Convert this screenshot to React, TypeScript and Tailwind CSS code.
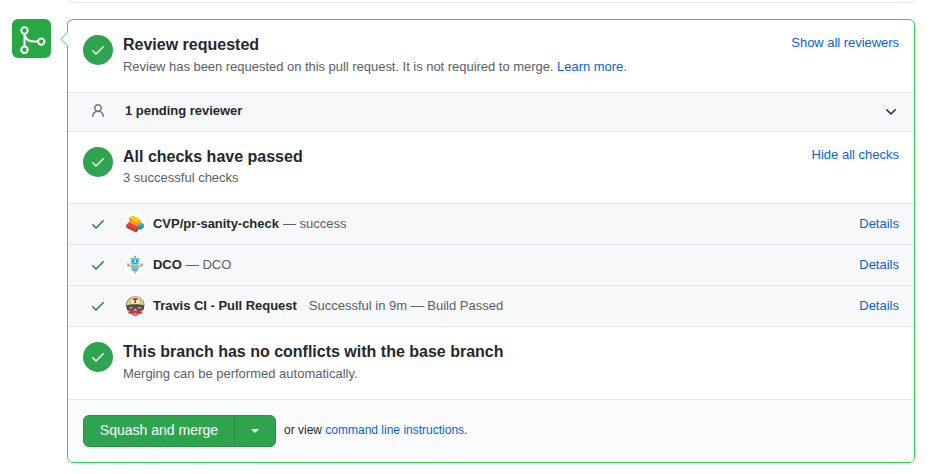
import React from "react";

function CheckMark({ className = "" }: { className?: string }) {
  return (
    <svg viewBox="0 0 16 16" width="16" height="16" fill="currentColor" className={className}>
      <path d="M13.78 4.22a.75.75 0 0 1 0 1.06l-7.25 7.25a.75.75 0 0 1-1.06 0L2.22 9.28a.75.75 0 0 1 1.06-1.06L6 10.94l6.72-6.72a.75.75 0 0 1 1.06 0Z" />
    </svg>
  );
}

function MergeIcon() {
  return (
    <svg viewBox="0 0 39 39" width="39" height="39" fill="none" stroke="white" strokeWidth="2">
      <circle cx="12.5" cy="11.5" r="3.2" />
      <circle cx="12.5" cy="30.7" r="3.2" />
      <circle cx="29.3" cy="22.6" r="3.2" />
      <path d="M12.5 14.700v12.800M12.700 15c.6 4.600 4 7.600 9.300 7.600h4" />
    </svg>
  );
}

function BricksLogo() {
  return (
    <svg viewBox="0 0 20 20" width="20" height="20">
      <path d="M12.300 11.200L15.500 8.500l3.300 1.700v3.300L15 16l-2.700-1.300z" fill="#1597cb" />
      <path d="M12.300 11.200L15.500 8.500l3.300 1.700-3.500 2.400z" fill="#2fb4e0" />
      <path d="M1.300 10.700L4.500 8l8.500 5v3.200L11.200 18.400 1.300 13.800z" fill="#d92f35" />
      <path d="M1.300 10.700L4.500 8l8.500 5-2.300 2.200z" fill="#ee443e" />
      <path d="M4.200 4L7.700 1.700l8 4.300v3.600L12.200 12l-8-4.200z" fill="#eda300" />
      <path d="M4.200 4L7.700 1.700l8 4.300-3.500 2.400z" fill="#fac913" />
    </svg>
  );
}

function RobotLogo() {
  return (
    <svg viewBox="0 0 20 20" width="20" height="20">
      <path d="M10 1v3" stroke="#59b8cf" />
      <circle cx="10" cy="1.500" r="1" fill="#ef766b" />
      <rect x="5.600" y="3" width="8.800" height="6.700" rx=".6" fill="#5cc8e1" />
      <rect x="6.500" y="4.800" width="7" height="2.400" fill="#a9dfec" />
      <path d="M7.200 5h1.800v1.800H7.200zM11 5h1.800v1.800H11z" fill="#3a6b7e" />
      <path d="M8 8.500h4" stroke="#337f94" strokeWidth=".6" />
      <path d="M6.500 10.300h7v4.700L10 17.500 6.500 15z" fill="#4abfdf" />
      <path d="M8 11h4v2.500H8z" fill="#f2a14a" />
      <path d="M8.200 16h3.600L10 19.500z" fill="#d8b591" />
      <path d="M6.500 11.800L3 9.800M13.500 11.800L17 9.800" stroke="#62bfd4" strokeWidth="1.500" />
      <path d="M2 8.200l2 .5v2.500H2.500zM18 8.200l-2 .5v2.500h1.500z" fill="#e97873" />
    </svg>
  );
}

function TravisLogo() {
  return (
    <svg viewBox="0 0 20 20" width="20" height="20">
      <ellipse cx="10.300" cy="12.500" rx="8" ry="7" fill="#c4a079" />
      <path d="M1.500 9.500C1 4.500 5 .7 10.200 .7S19.500 4.500 19 9.500c-5-1.500-12.500-1.500-17.500 0z" fill="#ede0a0" stroke="#6f6849" strokeWidth=".8" />
      <path d="M5.300 2.500L4.500 8M15.200 2.500l.8 5.500" stroke="#9f955d" strokeWidth=".8" fill="none" />
      <path d="M7 1.300h6.500v6H7z" fill="#f2e9bd" />
      <path d="M7.700 3h5M10.200 3v4" stroke="#9d2630" strokeWidth="1.400" />
      <path d="M1 9.700c5-1.300 13.500-1.300 18.500 0L18.500 14l-5.500 1-2.700-3-2.800 3L2 14z" fill="#4d4842" />
      <path d="M4 10.800h4v2.200H4zM12.500 10.800h4v2.200h-4z" fill="#928c7d" />
      <path d="M2.800 17.200c1.200-2.200 3.700-3 7.500-2.200 3.800-.8 6.300 0 7.500 2.200-1.700.6-3.200.1-4.400.5-2 -.9-4.200-.9-6.200 0-1.200-.4-2.700.1-4.400-.5z" fill="#da2b3c" />
      <path d="M7.200 18.300c2 .8 4.200.8 6.200 0v.8c-2 .7-4.200.7-6.200 0z" fill="#a9343c" />
    </svg>
  );
}

function StatusHeader({
  title,
  children,
  action,
  className,
  textClass = "",
  actionClass = "",
}: {
  title: React.ReactNode;
  children: React.ReactNode;
  action?: React.ReactNode;
  className: string;
  textClass?: string;
  actionClass?: string;
}) {
  return (
    <section className={`flex px-[15px] pt-[15px] ${className}`}>
      <div className="flex size-[30px] shrink-0 items-center justify-center rounded-full bg-[#2ea44f] text-white">
        <CheckMark />
      </div>
      <div className="ml-[10px] flex-1">
        <h3 className="-mt-[2px] text-[16px] font-bold leading-[23px] text-[#24292e]">{title}</h3>
        <p className={`text-[13px] leading-5 text-[#586069] ${textClass}`}>{children}</p>
      </div>
      {action && <a className={`-mt-[2px] text-[13px] leading-5 text-[#0366d6] ${actionClass}`}>{action}</a>}
    </section>
  );
}

function CheckRow({ logo, name, detail, gap }: { logo: React.ReactNode; name: string; detail: string; gap: string }) {
  return (
    <div className="flex h-[41px] items-center border-t border-[#e1e4e8] bg-[#f6f8fa] px-[15px] text-[13px] leading-5">
      <span className="flex w-[30px] justify-center text-[#22863a]">
        <CheckMark />
      </span>
      <span className="ml-3 size-5 overflow-hidden rounded-[5px] bg-white">{logo}</span>
      <strong className="ml-2 tracking-[-0.03px] text-[#24292e]">{name}</strong>
      <span className={`text-[#586069] ${gap}`}>{detail}</span>
      <a className="ml-auto text-[#0366d6]">Details</a>
    </div>
  );
}

export default function App() {
  return (
    <main className="h-[474px] overflow-hidden bg-white font-['Liberation_Sans',Arial,sans-serif] text-[#24292e]">
      <div className="ml-[67px] h-[3px] w-[848px] overflow-hidden">
        <div className="-mt-[9px] h-3 rounded-[6px] border border-[#e1e4e8]" />
      </div>
      <div className="mt-4 flex items-start pl-3">
        <div className="size-[39px] overflow-hidden rounded-[6px] bg-[#28a745]">
          <MergeIcon />
        </div>
        <div className="relative ml-4 h-[444px] w-[848px] rounded-[6px] border border-[#34d058]">
          <svg className="absolute -left-[8px] top-[11px]" width="9" height="16" viewBox="0 0 9 16">
            <path d="M9 0L1 8l8 8z" fill="white" />
            <path d="M8 .8L.8 8l7.200 7.200" fill="none" stroke="#85e297" strokeWidth="1.100" />
          </svg>
          <div className="h-full overflow-hidden rounded-[5px]">
            <StatusHeader title="Review requested" action="Show all reviewers" className="h-[72px]" textClass="mt-[1px] tracking-[-0.032px]" actionClass="tracking-[-0.04px]">
              Review has been requested on this pull request. It is not required to merge.{" "}
              <a className="text-[#0366d6]">Learn more.</a>
            </StatusHeader>
            <div className="flex h-[39px] items-center border-t border-[#e1e4e8] bg-[#f6f8fa] px-[15px] pb-[2px] text-[13px] leading-5">
              <svg className="ml-[7px] text-[#6a737d]" width="16" height="16" viewBox="0 0 16 16" fill="currentColor">
                <path fillRule="evenodd" d="M10.500 5a2.500 2.500 0 1 1-5 0 2.500 2.500 0 0 1 5 0Zm.061 3.073a4 4 0 1 0-5.123 0 6.004 6.004 0 0 0-3.431 5.142.75.75 0 0 0 1.498.07 4.500 4.500 0 0 1 8.990 0 .75.75 0 1 0 1.498-.070 6.004 6.004 0 0 0-3.432-5.142Z" />
              </svg>
              <strong className="ml-[19px] tracking-[-0.03px]">1 pending reviewer</strong>
              <svg className="ml-auto" width="16" height="16" viewBox="0 0 16 16" fill="currentColor">
                <path d="M12.780 6.220a.75.75 0 0 1 0 1.060l-4.250 4.250a.75.75 0 0 1-1.060 0L3.220 7.280a.75.75 0 0 1 1.060-1.060L8 9.940l3.720-3.720a.75.75 0 0 1 1.060 0Z" />
              </svg>
            </div>
            <StatusHeader title="All checks have passed" action="Hide all checks" className="h-[72px] border-t border-[#e1e4e8]">
              3 successful checks
            </StatusHeader>
            <CheckRow logo={<BricksLogo />} name="CVP/pr-sanity-check" detail="— success" gap="ml-1" />
            <CheckRow logo={<RobotLogo />} name="DCO" detail="— DCO" gap="ml-1" />
            <CheckRow logo={<TravisLogo />} name="Travis CI - Pull Request" detail="Successful in 9m — Build Passed" gap="ml-3" />
            <StatusHeader title="This branch has no conflicts with the base branch" className="h-[73px] border-t border-[#e1e4e8]" textClass="mt-[1px]">
              Merging can be performed automatically.
            </StatusHeader>
            <div className="flex h-[63px] items-center border-t border-[#e1e4e8] bg-[#fafbfc] px-[15px]">
              <div className="flex h-8 w-[193px] overflow-hidden rounded-[6px] border border-[#2a8f47] bg-[#2ea44f] text-white">
                <button className="w-[150px] pb-[2px] text-[14px] leading-5">Squash and merge</button>
                <button className="flex flex-1 items-center justify-center border-l border-[#2a8f47]">
                  <svg width="8" height="4" viewBox="0 0 8 4">
                    <path d="M0 0h8L4 4z" fill="white" />
                  </svg>
                </button>
              </div>
              <p className="ml-2 pb-[2px] text-[12px] leading-5">
                or view <a className="text-[#0366d6]">command line instructions</a>.
              </p>
            </div>
          </div>
        </div>
      </div>
    </main>
  );
}
